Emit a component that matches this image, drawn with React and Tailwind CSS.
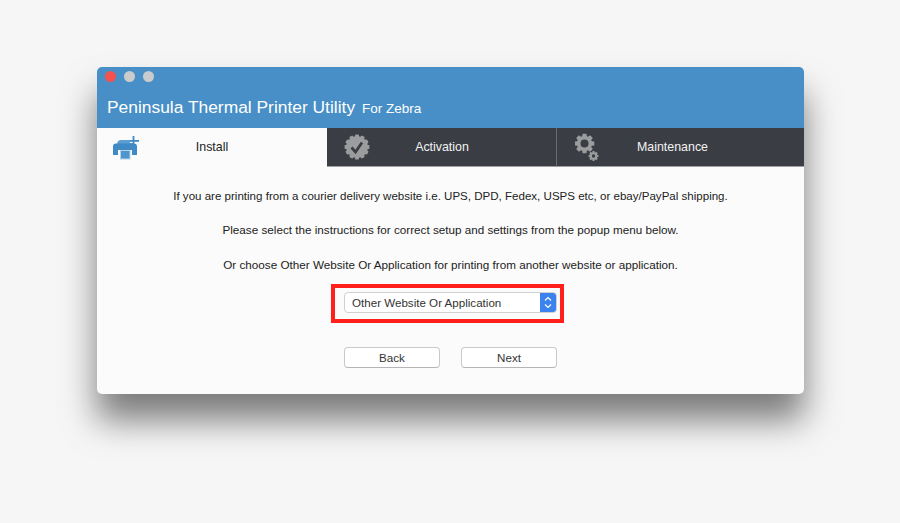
import React from "react";

const FONT = { fontFamily: '"Liberation Sans", Arial, sans-serif' };

// toothed ring outline, used for the badge and the two gears
function teeth(cx, cy, outer, inner, count) {
  const pts = [];
  for (let i = 0; i < count; i++) {
    const step = (Math.PI * 2) / count;
    const a = i * step;
    const w = step * 0.25;
    [[a - w, outer], [a + w, outer], [a + w * 1.6, inner], [a + step - w * 1.6, inner]].forEach(([t, r]) => {
      pts.push(`${(cx + Math.cos(t) * r).toFixed(2)},${(cy + Math.sin(t) * r).toFixed(2)}`);
    });
  }
  return pts.join(" ");
}

function PrinterIcon() {
  return (
    <svg width="30" height="28" viewBox="0 0 30 28" className="shrink-0">
      <path d="M4 11 Q4.5 7 8 7 L17 7 L17 10 L20 10 L20 11 Z" fill="#5c9dd2" />
      <path d="M0 13.5 Q0 10.5 3 10.5 L21 10.5 Q24 10.5 24 13.5 L24 22 L19 22 L19 17 L5 17 L5 22 L0 22 Z" fill="#3f8ac5" />
      <rect x="7.5" y="17.5" width="9.5" height="8.5" fill="#4f96cf" stroke="#b4d3ea" strokeWidth="1" />
      <rect x="17" y="7" width="9" height="1.8" fill="#3f8ac5" />
      <rect x="19.6" y="3" width="1.8" height="10" fill="#3f8ac5" />
    </svg>
  );
}

function BadgeIcon() {
  return (
    <svg width="26" height="28" viewBox="0 0 26 28" className="shrink-0">
      <polygon points={teeth(13, 14, 12.5, 10.8, 12)} fill="#9b9c9e" />
      <path d="M7.5 14.5 L11.5 19 L18 9.5" fill="none" stroke="#3a3d43" strokeWidth="2.8" />
    </svg>
  );
}

function GearsIcon() {
  return (
    <svg width="26" height="28" viewBox="0 0 26 28" className="shrink-0">
      <polygon points={teeth(9.5, 10.5, 10, 7.6, 8)} fill="#9b9c9e" />
      <circle cx="9.5" cy="10.5" r="4" fill="#3a3d43" />
      <polygon points={teeth(18.5, 23, 5, 3.8, 8)} fill="#9b9c9e" />
      <circle cx="18.5" cy="23" r="1.7" fill="#3a3d43" />
    </svg>
  );
}

function Tab({ icon, label, className, labelClass }) {
  return (
    <div className={`flex h-full items-center border-b ${className}`}>
      {icon}
      <span className={`flex-1 text-center text-[12.4px] ${labelClass}`}>{label}</span>
    </div>
  );
}

function Button({ children }) {
  return (
    <div className="flex h-[21px] w-[96px] items-center justify-center rounded-[4px] border border-[#c9c9c9] border-b-[#b5b5b5] bg-white text-[11.6px] text-[#333]">
      {children}
    </div>
  );
}

export default function App() {
  return (
    <div className="h-[523px] w-[900px] overflow-hidden bg-[#f6f6f6] pl-[97px] pt-[67px]" style={FONT}>
      <div className="w-[707px] overflow-hidden rounded-[5px] bg-[#fbfbfb] shadow-[0_26px_34px_rgba(0,0,0,0.5)]">
        <div className="h-[61px] bg-[#478fc6] pl-[8px] pt-[4px]">
          <div className="flex gap-[8px]">
            <span className="h-[11px] w-[11px] rounded-full bg-[#f4524f]" />
            <span className="h-[11px] w-[11px] rounded-full bg-[#c9cbcd]" />
            <span className="h-[11px] w-[11px] rounded-full bg-[#c9cbcd]" />
          </div>
          <div className="ml-[2px] mt-[12px] flex items-baseline gap-[7px] text-white">
            <span className="text-[17.4px]">Peninsula Thermal Printer Utility</span>
            <span className="text-[13.5px]">For Zebra</span>
          </div>
        </div>

        <div className="flex h-[39px]">
          <Tab
            icon={<PrinterIcon />}
            label="Install"
            className="w-[230px] border-[#fbfbfb] bg-[#fbfbfb] pl-[16px] text-[#222]"
            labelClass="pr-[46px]"
          />
          <Tab
            icon={<BadgeIcon />}
            label="Activation"
            className="w-[229px] border-[#a0a1a3] bg-[#3a3d43] pl-[17px] text-[#f2f2f2]"
            labelClass="pr-[42px]"
          />
          <Tab
            icon={<GearsIcon />}
            label="Maintenance"
            className="w-[248px] border-l border-[#6a6c70] border-b-[#a0a1a3] bg-[#3a3d43] pl-[18px] text-[#f2f2f2]"
            labelClass="pr-[60px]"
          />
        </div>

        <div className="flex h-[227px] flex-col items-center pt-[21px] text-[#222]">
          <p className="text-[11.55px] leading-[16px]">If you are printing from a courier delivery website i.e. UPS, DPD, Fedex, USPS etc, or ebay/PayPal shipping.</p>
          <p className="mt-[18px] text-[11.7px] leading-[16px]">Please select the instructions for correct setup and settings from the popup menu below.</p>
          <p className="mt-[19px] text-[11.7px] leading-[16px]">Or choose Other Website Or Application for printing from another website or application.</p>

          <div className="mr-[6px] mt-[11px] border-[4px] border-[#ff1f1b] pb-[6px] pl-[9px] pr-[3px] pt-[4px]">
            <div className="flex h-[21px] w-[213px] items-center overflow-hidden rounded-[4px] border border-[#d0d0d0] bg-white">
              <span className="flex-1 pl-[7px] text-[11.6px] text-[#333]">Other Website Or Application</span>
              <span className="flex h-full w-[16px] items-center justify-center bg-[#3b82ee]">
                <svg width="8" height="13" viewBox="0 0 8 13" fill="none" stroke="white" strokeWidth="1.2">
                  <path d="M1 4.5 L4 1.5 L7 4.5" />
                  <path d="M1 8.5 L4 11.5 L7 8.5" />
                </svg>
              </span>
            </div>
          </div>

          <div className="mt-[24px] flex gap-[21px]">
            <Button>Back</Button>
            <Button>Next</Button>
          </div>
        </div>
      </div>
    </div>
  );
}
